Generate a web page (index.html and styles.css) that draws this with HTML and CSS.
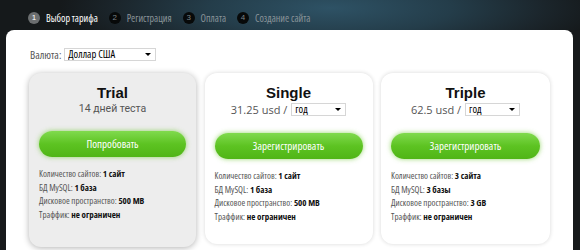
FILE: index.html
```html
<!DOCTYPE html>
<html lang="ru">
<head>
<meta charset="utf-8">
<title>Выбор тарифа</title>
<link rel="stylesheet" href="styles.css">
</head>
<body>
<div class="top">
  <ol class="steps">
    <li class="step active"><span class="num">1</span>Выбор тарифа</li>
    <li class="step"><span class="num">2</span>Регистрация</li>
    <li class="step"><span class="num">3</span>Оплата</li>
    <li class="step"><span class="num">4</span>Создание сайта</li>
  </ol>
</div>
<div class="panel">
  <div class="currency">
    <label class="cur-label">Валюта:</label>
    <span class="sel sel-cur"><select><option>Доллар США</option></select></span>
  </div>
  <div class="plans">
    <div class="plan plan-trial">
      <h2 class="plan-title">Trial</h2>
      <div class="plan-sub">14 дней теста</div>
      <a class="btn">Попробовать</a>
      <ul class="feat">
        <li>Количество сайтов: <b>1 сайт</b></li>
        <li>БД MySQL: <b>1 база</b></li>
        <li>Дисковое пространство: <b>500 MB</b></li>
        <li>Траффик: <b>не ограничен</b></li>
      </ul>
    </div>
    <div class="plan">
      <h2 class="plan-title">Single</h2>
      <div class="plan-price"><span>31.25 usd /</span><span class="sel sel-period"><select><option>год</option></select></span></div>
      <a class="btn">Зарегистрировать</a>
      <ul class="feat">
        <li>Количество сайтов: <b>1 сайт</b></li>
        <li>БД MySQL: <b>1 база</b></li>
        <li>Дисковое пространство: <b>500 MB</b></li>
        <li>Траффик: <b>не ограничен</b></li>
      </ul>
    </div>
    <div class="plan">
      <h2 class="plan-title">Triple</h2>
      <div class="plan-price"><span>62.5 usd /</span><span class="sel sel-period"><select><option>год</option></select></span></div>
      <a class="btn">Зарегистрировать</a>
      <ul class="feat">
        <li>Количество сайтов: <b>3 сайта</b></li>
        <li>БД MySQL: <b>3 базы</b></li>
        <li>Дисковое пространство: <b>3 GB</b></li>
        <li>Траффик: <b>не ограничен</b></li>
      </ul>
    </div>
  </div>
</div>
</body>
</html>
```

FILE: styles.css
```css
* { box-sizing: border-box; }
html, body { margin: 0; padding: 0; }
body {
  background: #17191b;
  font-family: "Open Sans", "Liberation Sans", Arial, sans-serif;
  font-stretch: 75%;
  height: 250px;
  overflow: hidden;
}
.top {
  height: 30px;
  background: radial-gradient(ellipse 270px 60px at 330px 8px, #2e5265 0%, #243d4a 45%, #1b252b 80%, #15191b 100%);
}
.steps {
  list-style: none;
  margin: 0;
  padding: 12px 0 0 28px;
  display: flex;
  align-items: center;
  gap: 11px;
}
.step {
  display: flex;
  align-items: center;
  gap: 6px;
  font-size: 10px;
  color: #8a9499;
  line-height: 12px;
}
.step.active { color: #fff; }
.num {
  width: 12px;
  height: 12px;
  border-radius: 50%;
  background: #070909;
  color: #7d8488;
  font-family: "Liberation Sans", Arial, sans-serif;
  font-stretch: normal;
  font-size: 8px;
  line-height: 12px;
  text-align: center;
}
.step.active .num { background: #6b6e70; color: #fff; }

.panel {
  margin: 0 7px 0 6px;
  background: #fff;
  border-radius: 8px 8px 0 0;
  padding: 18px 23px 0 23px;
  height: 230px;
}
.currency {
  display: flex;
  align-items: center;
  gap: 3px;
  margin-left: 1px;
  height: 13px;
}
.cur-label { font-size: 11px; font-stretch: 82%; color: #555; }
.sel {
  position: relative;
  display: inline-block;
}
.sel select {
  appearance: none;
  -webkit-appearance: none;
  border: 1px solid #d6d6d6;
  background: #fff;
  font-family: inherit;
  font-stretch: 75%;
  font-size: 10.5px;
  color: #000;
  height: 13px;
  line-height: 11px;
  padding: 0 0 0 3px;
  margin: 0;
  border-radius: 0;
  display: block;
}
.sel::after {
  content: "";
  position: absolute;
  right: 5px;
  top: 5px;
  border-left: 3px solid transparent;
  border-right: 3px solid transparent;
  border-top: 3px solid #000;
}
.sel-cur select { width: 92px; }
.sel-period select { width: 55px; }

.plans {
  margin-top: 12px;
  display: grid;
  grid-template-columns: 167px 168px 169px;
  justify-content: space-between;
}
.plan {
  height: 171px;
  border-radius: 12px;
  background: #fff;
  box-shadow: 0 0 4px rgba(0,0,0,0.16);
  padding: 12px 10px 0 10px;
  text-align: center;
}
.plan-trial {
  height: 174px;
  background: #ededed;
  box-shadow: 0 1px 6px rgba(0,0,0,0.3);
}
.plan-title {
  margin: 0;
  font-family: "Liberation Sans", Arial, sans-serif;
  font-stretch: normal;
  font-size: 15px;
  line-height: 16px;
  font-weight: bold;
  color: #111;
}
.plan-sub {
  margin-top: 1px;
  font-family: Roboto, "Liberation Sans", sans-serif;
  font-size: 10.5px;
  font-stretch: normal;
  color: #555;
  line-height: 14px;
  height: 14px;
}
.plan-price {
  margin-top: 1px;
  display: flex;
  justify-content: center;
  align-items: center;
  gap: 4px;
  font-size: 11px;
  font-stretch: 100%;
  color: #555;
  line-height: 15px;
  height: 15px;
}
.btn {
  display: block;
  margin-top: 15px;
  height: 26px;
  border-radius: 13px;
  background: linear-gradient(#80da4e, #5dc322 50%, #50b516);
  box-shadow: 0 0 5px rgba(110, 200, 50, 0.7);
  color: #fff;
  font-size: 11px;
  line-height: 26px;
  text-align: center;
}
.plan-price + .btn { margin-top: 16px; }
.feat {
  list-style: none;
  margin: 10px 0 0 0;
  padding: 0;
  text-align: left;
  font-size: 9px;
  color: #555;
}
.feat li { line-height: 13.5px; }
.feat b { color: #111; }
```
